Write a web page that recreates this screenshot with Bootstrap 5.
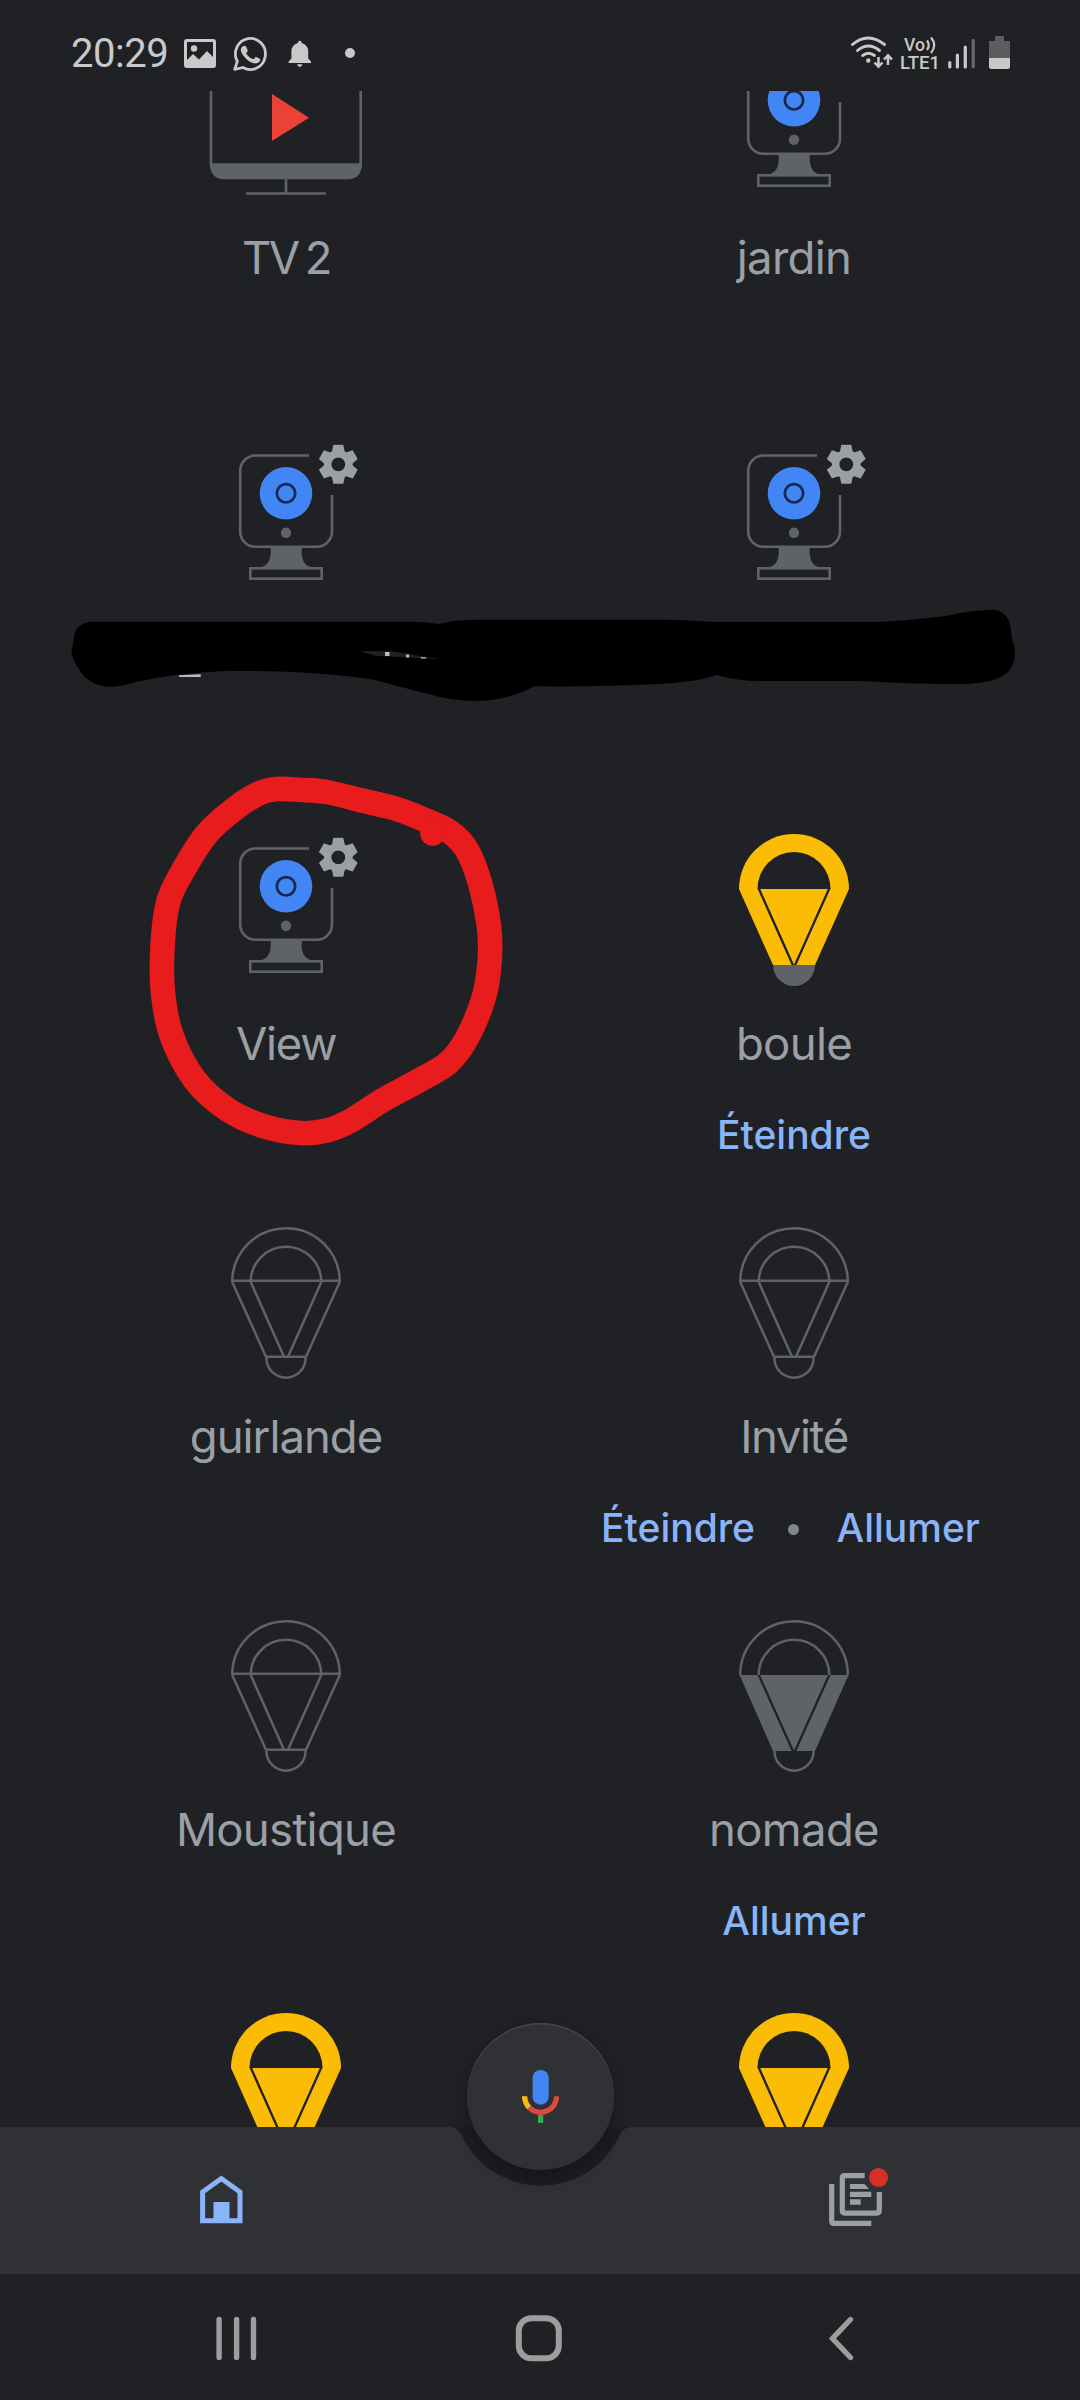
<!DOCTYPE html>
<html lang="fr">
<head>
<meta charset="utf-8">
<meta name="viewport" content="width=device-width, initial-scale=1">
<title>Maison</title>
<link href="https://cdn.jsdelivr.net/npm/bootstrap@5.3.0/dist/css/bootstrap.min.css" rel="stylesheet">
<style>
body{background:#202124;margin:0;overflow:hidden}
svg{display:block;flex:none}
.screen{width:1080px;height:2400px;background:#202124;overflow:hidden}
.statusbar{height:91px;padding:22px 70px 0 71px;color:#c8c9c8;flex:none}
.clock{font:400 40px/64px Roboto,sans-serif;letter-spacing:-.5px;width:112px;height:62px}
.devices{height:2036px;padding:0 32px;overflow:hidden;flex:none}
.device-grid{margin-top:-57px}
.tile{height:393px;padding-top:10px}
.tile-name{font:400 45.5px/60px Inter,"Open Sans",sans-serif;color:#9aa0a6;margin-top:24px;white-space:nowrap;letter-spacing:-.7px}
.n-tv{letter-spacing:-2.6px;word-spacing:-3px}
.n-view{letter-spacing:-1.3px}
.n-guirlande{letter-spacing:-1px}
.n-invite{letter-spacing:-1.4px}
.actions{font:500 39px/50px Inter,"Open Sans",sans-serif;color:#8ab4f8;margin-top:36px;white-space:nowrap}
.actions-pair{padding-right:7px}
.sep{width:11px;height:11px;background:#80868b;margin:2px 38px 0 32.5px}
.annotation{left:0;top:0;pointer-events:none;z-index:5}
.tabbar{height:147px;flex:none;z-index:2}
.tabbar-bg{left:0;top:0}
.mic{width:147px;height:147px;left:467px;top:-104px;background:#303134;box-shadow:0 6px 14px 3px rgba(0,0,0,.22),inset 0 1.5px 0 #45464a}
.sysnav{height:126px;flex:none}
</style>
</head>
<body>
<svg width="0" height="0" class="position-absolute">
<defs>
<symbol id="camera" viewBox="0 0 200 160">
 <path d="M123 18.5H69.5A15.3 15.3 0 0 0 54.2 33.8V94.5A15.3 15.3 0 0 0 69.5 109.8H130.7A15.3 15.3 0 0 0 146 94.5V58" fill="none" stroke="#5f6368" stroke-width="2.6"/>
 <path d="M84.7 109.8H115.7V117Q117 130 127.7 130.5H72.3Q83.5 130 84.7 117Z" fill="#5f6368"/>
 <rect x="64.3" y="131.3" width="71.4" height="10.4" fill="none" stroke="#5f6368" stroke-width="2.6"/>
 <circle cx="100" cy="56.3" r="26.3" fill="#4285f4"/><circle cx="100" cy="56.3" r="9.2" fill="none" stroke="#172a4d" stroke-width="2.7"/>
 <circle cx="100" cy="95.7" r="5.2" fill="#5f6368"/>
</symbol>
<symbol id="gear" viewBox="0 0 40 40">
 <g fill="#9aa0a6"><path id="tooth-pair" d="M15 .5H25L26.5 8H13.5ZM15 39.5H25L26.5 32H13.5Z"/><use href="#tooth-pair" transform="rotate(60 20 20)"/><use href="#tooth-pair" transform="rotate(120 20 20)"/></g>
 <circle cx="20" cy="20" r="10.6" fill="none" stroke="#9aa0a6" stroke-width="7.4"/>
</symbol>
<symbol id="bulb-on" viewBox="0 0 200 160">
 <path d="M45 59A55 55 0 0 1 155 59L121 135H79Z" fill="#fabc05"/>
 <path d="M63.5 59A36.5 37 0 0 1 136.5 59Z" fill="#202124"/>
 <path d="M64.5 58L99 135.3M135.5 58L101 135.3" stroke="#202124" stroke-width="2.3"/>
 <path d="M79 135H121A21 21 0 0 1 79 135Z" fill="#5f6368"/>
</symbol>
<symbol id="bulb-off" viewBox="0 0 200 160">
 <path d="M46.2 59A53.8 53.8 0 0 1 153.8 59L120 133.7M46.2 59L80 133.7M64.7 59A35.3 35.3 0 0 1 135.3 59L102 133.7M64.7 59L98 133.7M45.5 57.8H154.5M79.5 133.7H120.5M80.4 133.7V135A19.6 19.8 0 0 0 119.6 135V133.7" fill="none" stroke="#5f6368" stroke-width="2.5"/>
</symbol>
<symbol id="bulb-half" viewBox="0 0 200 160">
 <path d="M45.5 59H154.5L121 135H79Z" fill="#5f6368"/>
 <path d="M64.3 58L99 135.3M135.7 58L101 135.3" stroke="#202124" stroke-width="2.3"/>
 <path d="M46.2 59A53.8 53.8 0 0 1 153.8 59M64.7 59A35.3 35.3 0 0 1 135.3 59M80.4 134V135A19.6 19.8 0 0 0 119.6 135V134" fill="none" stroke="#5f6368" stroke-width="2.5"/>
</symbol>
</defs>
</svg>

<div class="screen position-relative d-flex flex-column">
 <header class="statusbar d-flex align-items-start justify-content-between">
  <div class="d-flex">
   <div class="clock">20:29</div>
   <svg width="180" height="60" viewBox="183 22 180 60">
    <path fill="#c8c9c8" fill-rule="evenodd" d="M187 39H213Q216 39 216 42V65Q216 68 213 68H187Q184 68 184 65V42Q184 39 187 39ZM187 42V60L193 54L199 59.5L207 51L213 57V42Z"/><circle cx="194" cy="48.5" r="3.2" fill="#c8c9c8"/>
    <path fill="none" stroke="#c8c9c8" stroke-width="2.8" stroke-linejoin="round" d="M234.7 69.4L237.3 61.5A15 15.6 0 1 1 243 67.5Z"/>
    <path fill="#c8c9c8" d="M242.500 46.500Q244.500 44.800 246 46.500L247.800 50.500Q247.500 52 246 53.200Q249 58 253.800 59.200L255.800 56.800L260.200 59Q260.500 62 256.500 63.300Q251.500 64 246 58.800Q240.500 53 240.800 49.500Q241 47.500 242.500 46.500Z"/>
    <path fill="#c8c9c8" d="M299.800 40.700Q301.500 40.700 301.800 43Q308.200 45 308.200 51.500V58.500L311 61.500V63H288.600V61.500L291.400 58.500V51.500Q291.400 45 297.800 43Q298.100 40.700 299.800 40.700ZM297.200 64.300H302.400Q302 67 299.800 67T297.200 64.300Z"/>
    <circle cx="350" cy="53" r="5" fill="#c8c9c8"/>
   </svg>
  </div>
  <svg width="162" height="60" viewBox="848 22 162 60">
   <g fill="none" stroke="#c8c9c8" stroke-width="2.9" stroke-linecap="round"><path d="M852.400 44.500Q868 31.500 884.500 44.500M857.500 50.500Q868.300 41.500 879.500 50.500M862.700 55.500Q868.300 51 874.500 55.500"/></g>
   <circle cx="868.300" cy="60.500" r="2.200" fill="#c8c9c8"/>
   <path d="M878.500 57V66M874.500 62.500L878.500 66.700L882.500 62.500M888 65V56M884 59.500L888 55.300L892 59.500" fill="none" stroke="#c8c9c8" stroke-width="2.500"/>
   <g font-family="Roboto,sans-serif" font-weight="500" fill="#c8c9c8"><text x="904" y="50.500" font-size="18.500" textLength="21" lengthAdjust="spacingAndGlyphs">Vo</text><text x="900" y="69" font-size="19" textLength="40" lengthAdjust="spacingAndGlyphs">LTE1</text></g>
   <path d="M927 40.500Q930.500 45 927 50M931 37.500Q937.500 45 931 53" fill="none" stroke="#c8c9c8" stroke-width="2.200"/>
   <g stroke-width="3.200" stroke-linecap="round" stroke="#c8c9c8"><path d="M949.800 62.500V67M957.400 55V67M965.300 47V67"/><path d="M973.200 40.300V67" stroke="#66676a"/></g>
   <path d="M995 36H1004V41H1010V58H989V41H995Z" fill="#5c5d5e"/><path d="M989 58H1010V66.500Q1010 69 1007.500 69H991.500Q989 69 989 66.500Z" fill="#c8c9c8"/>
  </svg>
 </header>

 <main class="devices">
  <div class="device-grid row g-0">
   <div class="tile col-6 d-flex flex-column align-items-center">
    <svg width="200" height="160" viewBox="0 0 200 160"><path d="M25 20V121M174.700 20V121" stroke="#5f6368" stroke-width="2.600"/><path d="M23.700 119.300H176V121Q175 135.300 161 135.300H39Q25 135.300 23.700 121Z" fill="#5f6368"/><path d="M100 135V149M60.200 149.500H139.800" stroke="#5f6368" stroke-width="2.700"/><path d="M86 50L123 73.700L86 97Z" fill="#ea4335"/></svg>
    <div class="tile-name n-tv">TV 2</div>
   </div>
   <div class="tile col-6 d-flex flex-column align-items-center">
    <svg width="200" height="160"><use href="#camera"/></svg>
    <div class="tile-name">jardin</div>
   </div>
   <div class="tile col-6 d-flex flex-column align-items-center">
    <svg width="200" height="160"><use href="#camera"/><use href="#gear" x="132.300" y="7.300" width="40" height="40"/></svg>
   </div>
   <div class="tile col-6 d-flex flex-column align-items-center">
    <svg width="200" height="160"><use href="#camera"/><use href="#gear" x="132.300" y="7.300" width="40" height="40"/></svg>
   </div>
   <div class="tile col-6 d-flex flex-column align-items-center">
    <svg width="200" height="160"><use href="#camera"/><use href="#gear" x="132.300" y="7.300" width="40" height="40"/></svg>
    <div class="tile-name n-view">View</div>
   </div>
   <div class="tile col-6 d-flex flex-column align-items-center">
    <svg width="200" height="160"><use href="#bulb-on"/></svg>
    <div class="tile-name">boule</div>
    <div class="actions d-flex align-items-center"><span>Éteindre</span></div>
   </div>
   <div class="tile col-6 d-flex flex-column align-items-center">
    <svg width="200" height="160"><use href="#bulb-off"/></svg>
    <div class="tile-name n-guirlande">guirlande</div>
   </div>
   <div class="tile col-6 d-flex flex-column align-items-center">
    <svg width="200" height="160"><use href="#bulb-off"/></svg>
    <div class="tile-name n-invite">Invité</div>
    <div class="actions actions-pair d-flex align-items-center"><span>Éteindre</span><i class="sep rounded-circle"></i><span>Allumer</span></div>
   </div>
   <div class="tile col-6 d-flex flex-column align-items-center">
    <svg width="200" height="160"><use href="#bulb-off"/></svg>
    <div class="tile-name">Moustique</div>
   </div>
   <div class="tile col-6 d-flex flex-column align-items-center">
    <svg width="200" height="160"><use href="#bulb-half"/></svg>
    <div class="tile-name">nomade</div>
    <div class="actions d-flex align-items-center"><span>Allumer</span></div>
   </div>
   <div class="tile col-6 d-flex flex-column align-items-center"><svg width="200" height="160"><use href="#bulb-on"/></svg></div>
   <div class="tile col-6 d-flex flex-column align-items-center"><svg width="200" height="160"><use href="#bulb-on"/></svg></div>
  </div>
 </main>

 <nav class="tabbar position-relative d-flex justify-content-between">
  <svg class="tabbar-bg position-absolute" width="1080" height="147" viewBox="0 2127 1080 147">
   <rect y="2127" width="1080" height="147" fill="#1c1d20"/>
   <path d="M0 2127H450Q457 2127 461 2134A87.300 87.300 0 0 0 620.400 2134Q624 2127 631 2127H1080V2274H0Z" fill="#303134"/>
  </svg>
  <svg class="position-relative" width="442" height="147" viewBox="0 2127 442 147"><path d="M202.600 2192L221.300 2178.500L240 2192V2220.700H202.600Z" fill="none" stroke="#8ab4f8" stroke-width="5"/><path d="M213.500 2202H229.500V2221H213.500Z" fill="#8ab4f8"/></svg>
  <svg class="position-relative" width="442" height="147" viewBox="638 2127 442 147">
   <g fill="none" stroke="#9aa0a6" stroke-width="5.200"><path d="M831.700 2184V2221Q831.700 2223.400 834.100 2223.400H871.300"/><path d="M864.700 2175.700H844.800Q842.300 2175.700 842.300 2178.200V2210.600Q842.300 2213.100 844.800 2213.100H876.800Q879.300 2213.100 879.300 2210.600V2192"/></g>
   <path d="M850 2184H864.500L869 2189H850ZM850 2191.700H871.300V2197H850ZM850 2199.300H860.700V2204.700H850Z" fill="#9aa0a6"/><circle cx="878.500" cy="2177.500" r="9.500" fill="#d93025"/>
  </svg>
  <button class="mic btn p-0 border-0 rounded-circle position-absolute" aria-label="Micro">
   <svg width="147" height="147" viewBox="467 2023 147 147"><rect x="532.600" y="2070" width="16.100" height="34.700" rx="8" fill="#4285f4"/><g fill="none" stroke-width="5.300"><path d="M524.600 2096.300A16 16 0 0 0 529.300 2107.600" stroke="#f9b917"/><path d="M529.300 2107.600A16 16 0 0 0 556.600 2096.300" stroke="#e04a3a"/><path d="M540.600 2115V2123" stroke="#34a853"/></g></svg>
  </button>
 </nav>

 <footer class="sysnav d-flex">
  <svg width="1080" height="126" viewBox="0 2274 1080 126" fill="none" stroke="#9d9d9e" stroke-linecap="round"><path d="M219.100 2319.500V2357.500M236.600 2319.500V2357.500M253.500 2319.500V2357.500" stroke-width="5.400"/><rect x="518.800" y="2318.200" width="40" height="40" rx="12.500" stroke-width="6"/><path d="M850.500 2319.500L832.500 2338.500L850.500 2357.500" stroke-width="5.400"/></svg>
 </footer>

 <svg class="annotation position-absolute" width="1080" height="1200" viewBox="0 0 1080 1200">
  <path d="M94 621.700H408Q424 621.700 438.600 624Q455 619.700 477 619.700H668Q685 620 716 622H875Q905 621 945.600 616Q975 609.700 993.500 609.700Q1008 611 1010.600 628L1012 639.300Q1016 648 1014.500 658C1012 678 990 684 958 684Q905 684 862.700 681H760Q738 681 717 675Q692 683 658 684Q600 687 534 686.300Q508 701 473.700 701Q450 700 435 695.700L371.600 679.300Q310 670 225 671Q175 673 135.700 682Q122 687 107 686.700Q95 686 84.600 676.700Q71 660 71.500 650L73.800 640Q74 622 94 621.700Z" fill="#000"/>
  <path d="M359 651L391 651.300L440.500 659.300L375 655.700Z" fill="#202124"/>
  <path d="M179 676.900V675.300L200.700 674.300V676.900ZM385 652H389.500V656H385ZM406 654.500H409.200V657.600H406ZM420.700 657.200H426V658.400H420.700Z" fill="#b9bbbd"/>
  <path id="ring" fill="none" stroke="#e81c1c" stroke-width="24.600" stroke-linejoin="round"/>
  <circle cx="432.500" cy="833.500" r="12.300" fill="#e81c1c"/>
 </svg>
</div>
<script src="https://cdn.jsdelivr.net/npm/bootstrap@5.3.0/dist/js/bootstrap.bundle.min.js"></script>
<script>
// Smooth closed curve through the hand-drawn ring's points
const pts=[[276.700,789],[300,789.800],[326.700,792],[363,800.700],[396.700,809],[425,820],[450,832],[467,850],[480,883],[489,926.700],[489.700,960],[484,996.700],[467,1038],[448,1063],[416.700,1081.700],[383,1100],[350,1121],[326.700,1130.500],[300,1133],[263,1126],[226.700,1109],[195,1080],[172,1036.700],[163,993],[162.500,946.700],[168,903],[181.700,873],[206.700,834],[237,807],[260,793]];
const n=pts.length;let d=`M${pts[0]}`;
for(let i=0;i<n;i++){const a=pts[(i+n-1)%n],b=pts[i],c=pts[(i+1)%n],e=pts[(i+2)%n];
d+=`C${b[0]+(c[0]-a[0])/6} ${b[1]+(c[1]-a[1])/6} ${c[0]-(e[0]-b[0])/6} ${c[1]-(e[1]-b[1])/6} ${c[0]} ${c[1]}`}
document.getElementById('ring').setAttribute('d',d+'Z');
</script>
</body>
</html>
